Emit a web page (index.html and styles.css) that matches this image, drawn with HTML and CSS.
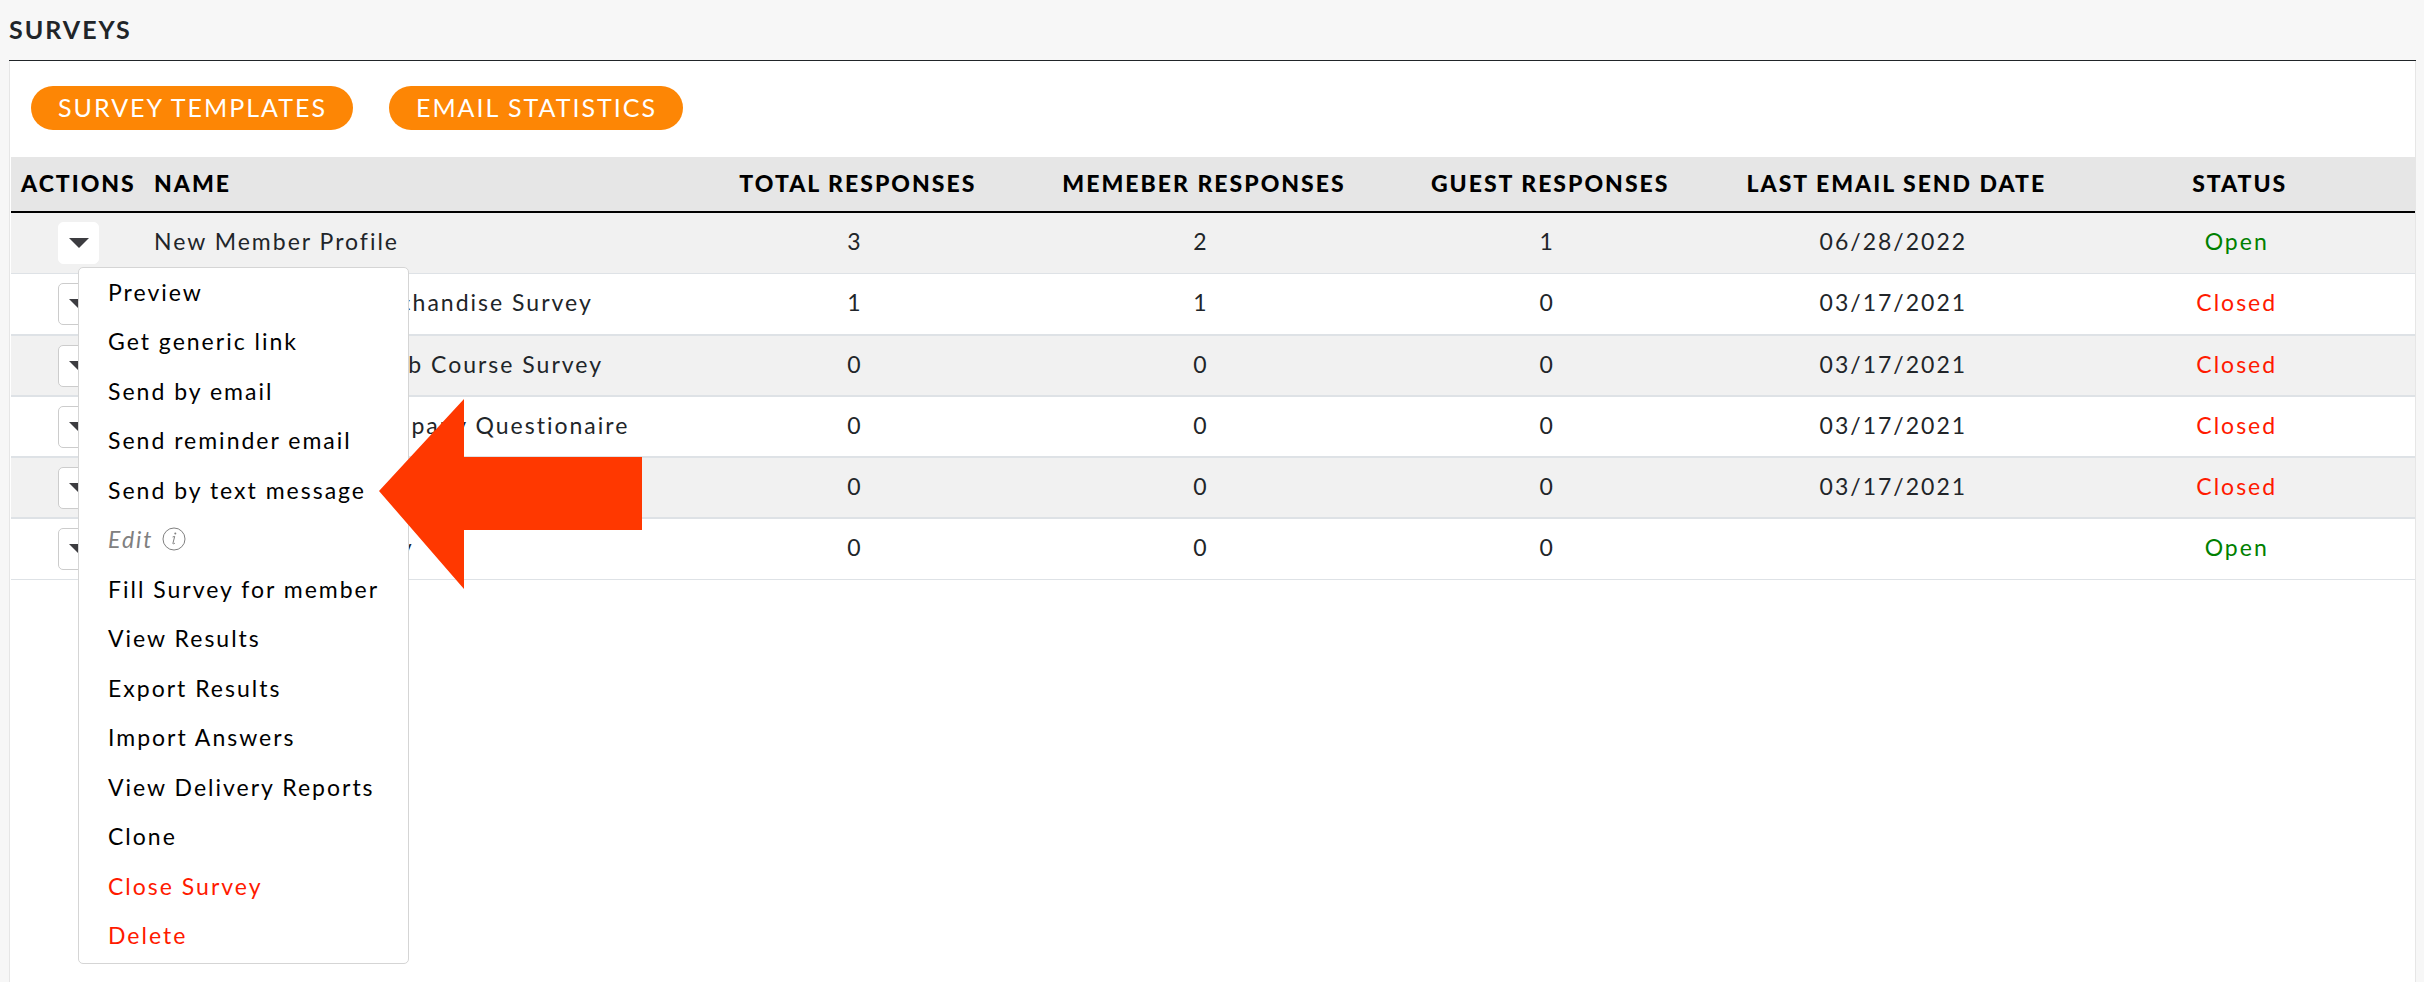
FILE: index.html
```html
<!DOCTYPE html>
<html lang="en">
<head>
  <meta charset="UTF-8">
  <title>Surveys</title>
  <link rel="stylesheet" href="styles.css">
</head>
<body>

  <h1>SURVEYS</h1>

  <main class="panel">
    <div class="toolbar">
      <button class="pill">SURVEY TEMPLATES</button>
      <button class="pill">EMAIL STATISTICS</button>
    </div>

    <table class="surveys">
      <colgroup>
        <col class="col-actions">
        <col>
        <col class="col-data">
        <col class="col-data">
        <col class="col-data">
        <col class="col-data">
        <col class="col-status">
      </colgroup>
      <thead>
        <tr>
          <th class="name">ACTIONS</th>
          <th class="name">NAME</th>
          <th>TOTAL RESPONSES</th>
          <th>MEMEBER RESPONSES</th>
          <th>GUEST RESPONSES</th>
          <th>LAST EMAIL SEND DATE</th>
          <th>STATUS</th>
        </tr>
      </thead>
      <tbody>
        <tr>
          <td class="actions">
            <div class="dropdown open">
              <button class="toggle" aria-label="Actions"><span class="caret"></span></button>
              <ul class="menu">
                <li><a href="#">Preview</a></li>
                <li><a href="#">Get generic link</a></li>
                <li><a href="#">Send by email</a></li>
                <li><a href="#">Send reminder email</a></li>
                <li class="marked">
                  <a href="#">Send by text message</a>
                  <svg class="arrow" width="263" height="190" viewBox="0 0 263 190" aria-hidden="true">
                    <path d="M0 92 L85 0 V58 H263 V131 H85 V190 Z"/>
                  </svg>
                </li>
                <li class="disabled">
                  <span>Edit</span>
                  <svg class="info" width="24" height="24" viewBox="0 0 24 24" aria-hidden="true">
                    <circle cx="12" cy="12" r="11"/>
                    <path d="M10.6 10 L12.7 9.4 L10.9 16.4 Q10.7 17.6 12.9 16.2"/>
                    <circle class="dot" cx="13.3" cy="6.6" r="1"/>
                  </svg>
                </li>
                <li><a href="#">Fill Survey for member</a></li>
                <li><a href="#">View Results</a></li>
                <li><a href="#">Export Results</a></li>
                <li><a href="#">Import Answers</a></li>
                <li><a href="#">View Delivery Reports</a></li>
                <li><a href="#">Clone</a></li>
                <li><a href="#" class="danger">Close Survey</a></li>
                <li><a href="#" class="danger">Delete</a></li>
              </ul>
            </div>
          </td>
          <td class="name">New Member Profile</td>
          <td>3</td>
          <td>2</td>
          <td>1</td>
          <td>06/28/2022</td>
          <td class="is-open">Open</td>
        </tr>
        <tr>
          <td class="actions"><div class="dropdown"><button class="toggle" aria-label="Actions"><span class="caret"></span></button></div></td>
          <td class="name">2021 Club Shop Merchandise Survey</td>
          <td>1</td>
          <td>1</td>
          <td>0</td>
          <td>03/17/2021</td>
          <td class="is-closed">Closed</td>
        </tr>
        <tr>
          <td class="actions"><div class="dropdown"><button class="toggle" aria-label="Actions"><span class="caret"></span></button></div></td>
          <td class="name">Annual Members' Club Course Survey</td>
          <td>0</td>
          <td>0</td>
          <td>0</td>
          <td>03/17/2021</td>
          <td class="is-closed">Closed</td>
        </tr>
        <tr>
          <td class="actions"><div class="dropdown"><button class="toggle" aria-label="Actions"><span class="caret"></span></button></div></td>
          <td class="name">HR Management Company Questionaire</td>
          <td>0</td>
          <td>0</td>
          <td>0</td>
          <td>03/17/2021</td>
          <td class="is-closed">Closed</td>
        </tr>
        <tr>
          <td class="actions"><div class="dropdown"><button class="toggle" aria-label="Actions"><span class="caret"></span></button></div></td>
          <td class="name">Event Survey</td>
          <td>0</td>
          <td>0</td>
          <td>0</td>
          <td>03/17/2021</td>
          <td class="is-closed">Closed</td>
        </tr>
        <tr>
          <td class="actions"><div class="dropdown"><button class="toggle" aria-label="Actions"><span class="caret"></span></button></div></td>
          <td class="name">Food &amp; Dining Survey</td>
          <td>0</td>
          <td>0</td>
          <td>0</td>
          <td></td>
          <td class="is-open">Open</td>
        </tr>
      </tbody>
    </table>
  </main>

</body>
</html>
```
FILE: styles.css
```css
* {
  box-sizing: border-box;
}

body {
  display: flex;
  flex-direction: column;
  min-height: 100vh;
  margin: 0;
  padding: 0 8px 0 9px;
  background-color: #f7f7f7;
  color: #212529;
  font-family: Lato, 'Liberation Sans', sans-serif;
  font-size: 23px;
  letter-spacing: 2px;
}

h1 {
  margin: 0;
  padding: 14px 0 16px;
  border-bottom: 1px solid #212529;
  font-size: 25px;
  line-height: 30px;
}

.panel {
  flex: 1;
  padding-left: 1px;
  background-color: white;
  border: 1px solid #e6e6e6;
  border-width: 0 1px;
}

.toolbar {
  display: flex;
  gap: 36px;
  padding: 25px 20px 27px;
}

.pill {
  height: 44px;
  padding: 0 26px 3px 27px;
  border: none;
  border-radius: 22px;
  background-color: #fd8605;
  color: white;
  font: inherit;
  font-size: 25px;
  letter-spacing: 2px;
  cursor: pointer;
}

/* survey list */
.surveys {
  width: 100%;
  border-collapse: separate;
  border-spacing: 0;
  table-layout: fixed;
}

.col-actions {
  width: 133px;
}

.col-data {
  width: 14.4%;
}

.col-status {
  width: 14.5%;
}

th {
  height: 56px;
  padding: 0 0 3px 6px;
  background-color: #e6e6e6;
  border-bottom: 2px solid black;
  color: black;
  font-weight: 900;
}

td {
  height: 61px;
  padding: 0 0 4px;
  border-bottom: 2px solid #dee2e6;
  text-align: center;
}

tr:first-child td,
tr:last-child td {
  border-bottom-width: 1px;
}

tr:nth-child(2) td {
  height: 62px;
}

td.actions {
  padding: 0;
}

.name {
  padding-left: 10px;
  text-align: left;
  white-space: nowrap;
}

th:last-child,
td:last-child {
  padding-right: 8px;
}

tbody tr:nth-child(odd) {
  background-color: #f1f1f1;
}

.is-open {
  color: green;
}

.is-closed {
  color: #ff1a00;
}

/* actions dropdown */
.dropdown {
  position: relative;
  width: 41px;
  margin-left: 47px;
}

.toggle {
  display: flex;
  align-items: center;
  justify-content: center;
  width: 41px;
  height: 42px;
  padding: 0;
  border: 1px solid #ccc;
  border-radius: 5px;
  background-color: white;
  cursor: pointer;
}

.open .toggle {
  border-color: white;
}

.caret {
  border: 10px solid transparent;
  border-top-color: #3c3c40;
  border-bottom: none;
}

.menu {
  position: absolute;
  z-index: 1;
  top: calc(100% + 3px);
  left: 20px;
  width: 331px;
  margin: 0;
  padding: 0 0 2px;
  list-style: none;
  background-color: white;
  border: 1px solid #d5d5d5;
  border-radius: 5px;
  text-align: left;
}

.menu li {
  display: flex;
  align-items: center;
  gap: 8px;
  height: 49px;
  padding: 0 0 2px 29px;
}

.menu li:nth-child(even) {
  height: 50px;
}

.menu a {
  color: black;
  text-decoration: none;
  white-space: nowrap;
}

.menu a.danger {
  color: #ff1a00;
}

.menu .disabled {
  color: #808080;
  font-style: italic;
}

.info {
  fill: none;
  stroke: #808080;
}

.info .dot {
  fill: #808080;
  stroke: none;
}

.marked {
  position: relative;
}

.arrow {
  position: absolute;
  left: 300px;
  top: -67px;
  fill: #ff3800;
}
```
